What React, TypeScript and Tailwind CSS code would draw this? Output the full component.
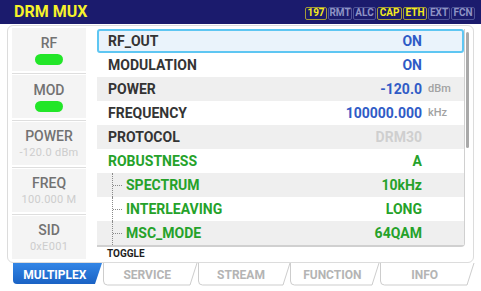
import React from 'react';

type Tone = 'blue' | 'green' | 'dim';

interface Row {
  label: string;
  value: string;
  unit?: string;
  tone: Tone;
  green?: boolean;
  child?: boolean;
  selected?: boolean;
}

const ROWS: Row[] = [
  { label: 'RF_OUT', value: 'ON', tone: 'blue', selected: true },
  { label: 'MODULATION', value: 'ON', tone: 'blue' },
  { label: 'POWER', value: '-120.0', unit: 'dBm', tone: 'blue' },
  { label: 'FREQUENCY', value: '100000.000', unit: 'kHz', tone: 'blue' },
  { label: 'PROTOCOL', value: 'DRM30', tone: 'dim' },
  { label: 'ROBUSTNESS', value: 'A', tone: 'green', green: true },
  { label: 'SPECTRUM', value: '10kHz', tone: 'green', green: true, child: true },
  { label: 'INTERLEAVING', value: 'LONG', tone: 'green', green: true, child: true },
  { label: 'MSC_MODE', value: '64QAM', tone: 'green', green: true, child: true },
];

const TONE: Record<Tone, string> = {
  blue: 'text-[#2f5bc6]',
  green: 'text-[#25a22a]',
  dim: 'text-[#cfcfcf]',
};

const BADGES = [
  { t: '197', on: true, w: 'w-[22px]' },
  { t: 'RMT', on: false, w: 'w-[24px]' },
  { t: 'ALC', on: false, w: 'w-[23px]' },
  { t: 'CAP', on: true, w: 'w-[25px]' },
  { t: 'ETH', on: true, w: 'w-[24px]' },
  { t: 'EXT', on: false, w: 'w-[22px]' },
  { t: 'FCN', on: false, w: 'w-[24px]' },
];

const SIDE = [
  { label: 'RF', led: true },
  { label: 'MOD', led: true },
  { label: 'POWER', sub: '-120.0 dBm' },
  { label: 'FREQ', sub: '100.000 M' },
  { label: 'SID', sub: '0xE001' },
];

const TABS = [
  { label: 'MULTIPLEX', w: 90 },
  { label: 'SERVICE', w: 95 },
  { label: 'STREAM', w: 93 },
  { label: 'FUNCTION', w: 90 },
  { label: 'INFO', w: 95 },
];

function Tab({ label, w, active }: { label: string; w: number; active: boolean }) {
  const h = 23;
  return (
    <div className="relative flex h-[23px] items-center justify-center" style={{ width: w }}>
      <svg className="absolute inset-0 overflow-visible" width={w} height={h}>
        {active ? (
          <>
            <defs>
              <linearGradient id="tabBlue" x1="0" y1="0" x2="0" y2="1">
                <stop offset="0" stopColor="#3386e6" />
                <stop offset="1" stopColor="#1a62c4" />
              </linearGradient>
            </defs>
            <path d={`M1 0 H${w} L${w - 7} ${h - 2} H5 Q1 ${h - 2} 1 ${h - 6} Z`} fill="url(#tabBlue)" />
          </>
        ) : (
          <path
            d={`M1.5 0 V${h - 5} Q1.5 ${h - 1} 5.5 ${h - 1} H${w - 7} L${w} 0`}
            fill="#ffffff"
            stroke="#cdcdcd"
            strokeWidth="1"
          />
        )}
      </svg>
      <span
        className={`relative -ml-[4px] text-[12px] font-bold ${active ? 'text-white' : 'text-[#b4b4b4]'}`}
      >
        {label}
      </span>
    </div>
  );
}

export default function App() {
  return (
    <div className="h-[291px] w-[481px] overflow-hidden bg-white font-['Roboto','Liberation_Sans',sans-serif]">
      <div className="flex h-[24px] items-center justify-between bg-[#1b1b6d] pl-[14px] pr-[6px]">
        <span className="text-[16px] font-bold leading-none text-[#f6f22a]">DRM MUX</span>
        <div className="flex gap-[1px] pt-[2px]">
          {BADGES.map((b) => (
            <span
              key={b.t}
              className={`flex h-[13px] ${b.w} items-center justify-center rounded-[2px] border text-[10px] font-bold leading-none ${
                b.on ? 'border-[#a49c38] text-[#f4ea1c]' : 'border-[#4f5498] text-[#8e93c4]'
              }`}
            >
              {b.t}
            </span>
          ))}
        </div>
      </div>

      <div className="px-[7px] pt-[1px]">
        <div className="flex h-[238px] rounded-[6px] border border-[#dcdcdc]">
          <div className="ml-[4px] mt-[2px] flex w-[74px] flex-col">
            {SIDE.map((s, i) => (
              <React.Fragment key={s.label}>
                {i > 0 && (
                  <div className="flex h-[4px] items-center">
                    <div className="h-[1px] w-full bg-[#dedede]" />
                  </div>
                )}
                <div className="flex h-[43px] flex-col items-center justify-center bg-[#f4f4f4]">
                  <span className="text-[14px] font-medium leading-[16px] text-[#727272]">{s.label}</span>
                  {s.led ? (
                    <span className="mt-[3px] h-[11px] w-[28px] rounded-full bg-[#22e628]" />
                  ) : (
                    <span className="mt-[2px] text-[11px] leading-[13px] tracking-[0.3px] text-[#cdcdcd]">{s.sub}</span>
                  )}
                </div>
              </React.Fragment>
            ))}
          </div>

          <div className="ml-[11px] mr-[2px] mt-[3px] flex flex-1 flex-col">
            <div className="flex">
              <div className="flex flex-1 flex-col rounded-br-[4px] border-b-2 border-r border-[#d0d0d0]">
                {ROWS.map((r, i) => (
                  <div
                    key={r.label}
                    className={`flex h-[24px] items-center text-[14px] font-bold ${
                      r.selected
                        ? 'rounded-[3px] border-2 border-[#5ec6f2] bg-[#eaf3fb]'
                        : i % 2 === 0
                          ? 'bg-[#efefef]'
                          : 'bg-white'
                    }`}
                  >
                    {r.child ? (
                      <div className="flex h-full w-[29px] shrink-0">
                        <div className="w-[15px]" />
                        <div className="flex h-full items-center border-l border-dotted border-[#8a8a8a]">
                          <div className="w-[9px] border-t border-dotted border-[#8a8a8a]" />
                        </div>
                      </div>
                    ) : (
                      <div className={r.selected ? 'w-[9px]' : 'w-[11px]'} />
                    )}
                    <span className={r.green ? 'text-[#25a22a]' : 'text-[#343434]'}>{r.label}</span>
                    <span className={`flex-1 text-right ${TONE[r.tone]}`}>{r.value}</span>
                    <span className={`${r.selected ? 'w-[40px]' : 'w-[42px]'} pl-[6px] text-[11px] font-medium text-[#a2a2a2]`}>
                      {r.unit ?? ''}
                    </span>
                  </div>
                ))}
              </div>
              <div className="ml-[1px] w-[5px] pt-[3px]">
                <div className="h-[116px] w-[3px] rounded-[2px] bg-[#a9a9a9]" />
              </div>
            </div>
            <span className="pl-[10px] pt-[1px] text-[10px] font-bold leading-[12px] text-[#1e1e1e]">TOGGLE</span>
          </div>
        </div>

        <div className="ml-[5px] flex">
          {TABS.map((t, i) => (
            <Tab key={t.label} label={t.label} w={t.w} active={i === 0} />
          ))}
        </div>
      </div>
    </div>
  );
}
